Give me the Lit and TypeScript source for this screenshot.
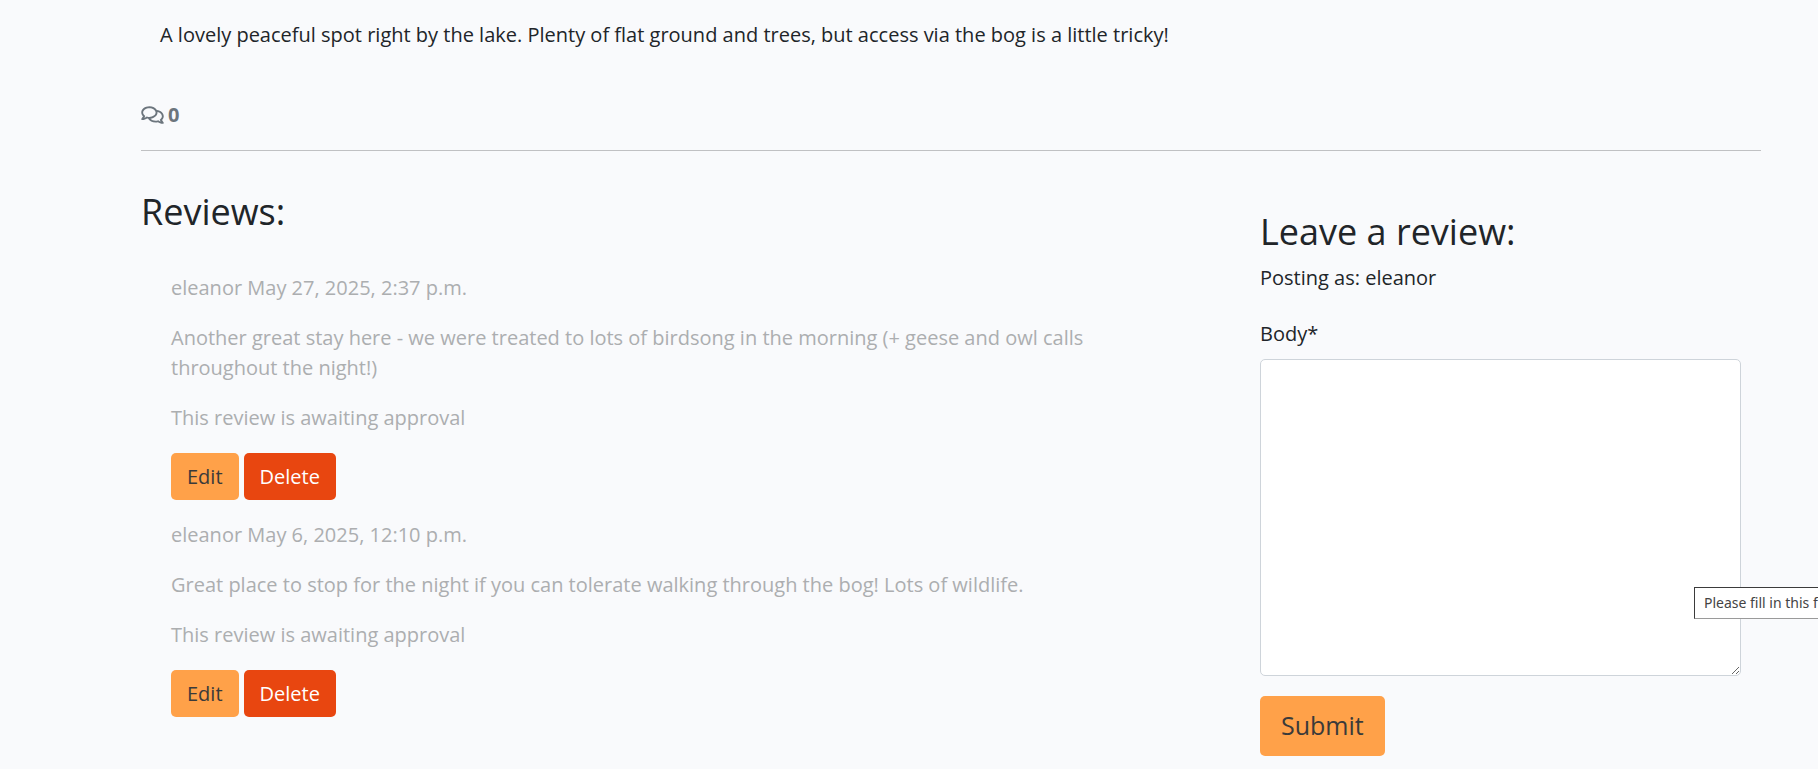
import { LitElement, html, css } from "lit";
import { customElement, property } from "lit/decorators.js";

interface Review {
  author: string;
  date: string;
  body: string;
}

const REVIEWS: Review[] = [
  {
    author: "eleanor",
    date: "May 27, 2025, 2:37 p.m.",
    body: "Another great stay here - we were treated to lots of birdsong in the morning (+ geese and owl calls throughout the night!)",
  },
  {
    author: "eleanor",
    date: "May 6, 2025, 12:10 p.m.",
    body: "Great place to stop for the night if you can tolerate walking through the bog! Lots of wildlife.",
  },
];

const buttonStyles = css`
  .btn {
    border: 0;
    border-radius: 5px;
    padding: 9px 16px 8px;
    font: inherit;
    cursor: pointer;
  }
  .btn-main {
    background: #ffa149;
    color: #3a3a3a;
  }
  .btn-delete {
    background: #e84610;
    color: #ffffff;
    font-weight: 500;
  }
`;

@customElement("review-item")
class ReviewItem extends LitElement {
  @property({ attribute: false }) review!: Review;

  static styles = [
    buttonStyles,
    css`
      :host {
        display: block;
        color: #acaeb0;
      }
      p {
        margin: 0 0 20px;
      }
      .actions {
        display: flex;
        gap: 5px;
      }
    `,
  ];

  render() {
    return html`
      <p>${this.review.author} ${this.review.date}</p>
      <p>${this.review.body}</p>
      <p>This review is awaiting approval</p>
      <div class="actions">
        <button class="btn btn-main" type="button">Edit</button>
        <button class="btn btn-delete" type="button">Delete</button>
      </div>
    `;
  }
}

@customElement("review-form")
class ReviewForm extends LitElement {
  static styles = [
    buttonStyles,
    css`
      :host {
        display: block;
      }
      h3 {
        margin: 0 0 10px;
        font-size: 36px;
        font-weight: 400;
        line-height: 42px;
      }
      p {
        margin: 0 0 26px;
      }
      label {
        display: block;
        margin-bottom: 10px;
      }
      .field {
        position: relative;
        display: grid;
        margin-bottom: 20px;
      }
      textarea {
        box-sizing: border-box;
        width: 100%;
        height: 317px;
        margin: 0;
        padding: 8px 15px;
        border: 1px solid #ced4da;
        border-radius: 5px;
        background: #ffffff;
        color: inherit;
        font: inherit;
        resize: vertical;
      }
      .tooltip {
        position: absolute;
        left: calc(100% - 47px);
        bottom: 57px;
        padding: 5px 9px;
        border: 1px solid #3b3b3b;
        border-bottom-color: #9a9a9a;
        background: #ffffff;
        color: #444444;
        font-family: "Noto Sans", "Open Sans", sans-serif;
        font-size: 14px;
        line-height: 20px;
        white-space: nowrap;
      }
      .btn-large {
        padding: 10px 21px 12px;
        font-size: 25px;
        line-height: 38px;
      }
    `,
  ];

  render() {
    return html`
      <h3>Leave a review:</h3>
      <p>Posting as: eleanor</p>
      <form>
        <label for="body">Body*</label>
        <div class="field">
          <textarea id="body" name="body" required></textarea>
          <div class="tooltip" role="tooltip">Please fill in this field.</div>
        </div>
        <button class="btn btn-main btn-large" type="submit">Submit</button>
      </form>
    `;
  }
}

@customElement("app-root")
class AppRoot extends LitElement {
  static styles = css`
    :host {
      display: block;
      box-sizing: border-box;
      min-height: 100vh;
      padding: 20px 57px 12px 141px;
      overflow-x: clip;
      background: #f9fafc;
      color: #212529;
      font: 400 20px/30px "Open Sans", sans-serif;
    }
    .description {
      margin: 0 19px 50px;
    }
    .count {
      display: flex;
      align-items: center;
      gap: 4px;
      color: #6c757d;
      font-weight: 700;
    }
    .count svg {
      width: 23px;
      height: 20px;
    }
    hr {
      height: 1px;
      margin: 20px 0 40px;
      border: 0;
      background: #c0c1c3;
    }
    .row {
      display: grid;
      grid-template-columns: 2fr 1fr;
      margin: 0 -15px;
    }
    .col {
      padding: 0 15px;
    }
    h3 {
      margin: 0 0 40px;
      font-size: 36px;
      font-weight: 400;
      line-height: 42px;
    }
    .reviews {
      display: grid;
      gap: 20px;
      padding: 0 30px;
    }
    review-form {
      margin: 20px 20px 0 19px;
    }
  `;

  render() {
    return html`
      <p class="description">
        A lovely peaceful spot right by the lake. Plenty of flat ground and trees, but access via
        the bog is a little tricky!
      </p>
      <div class="count">
        <svg viewBox="0 0 576 512" fill="currentColor" aria-hidden="true">
          <path
            d="M532 386.2c27.5-27.1 44-61.1 44-98.2 0-80-76.5-146.1-176.2-157.9C368.3 72.5 294.3 32 208 32 93.1 32 0 103.6 0 192c0 37 16.5 71 44 98.2-15.3 30.7-37.3 54.5-37.7 54.9-6.3 6.7-8.1 16.5-4.4 25 3.6 8.5 12 14 21.2 14 53.5 0 96.7-20.2 125.2-38.8 9.2 2.1 18.7 3.7 28.4 4.9C208.1 407.6 281.8 448 368 448c20.8 0 40.8-2.4 59.8-6.8C456.3 459.7 499.4 480 553 480c9.2 0 17.5-5.5 21.2-14 3.6-8.5 1.9-18.3-4.4-25-.4-.3-22.5-24.1-37.8-54.8zm-392.8-92.3L122.1 305c-14.1 9.1-28.5 16.3-43.1 21.4 2.7-4.7 5.4-9.7 8-14.8l15.5-31.1L77.7 256C64.2 242.6 48 220.7 48 192c0-60.7 73.3-112 160-112s160 51.3 160 112-73.3 112-160 112c-16.5 0-33-1.9-49-5.6l-19.8-4.5zM498.3 352l-24.7 24.4 15.5 31.1c2.6 5.1 5.3 10.1 8 14.8-14.6-5.1-29-12.3-43.1-21.4l-17.1-11.1-19.9 4.6c-16 3.7-32.5 5.6-49 5.6-54 0-102.2-20.1-131.3-49.7C338 339.5 416 272.9 416 192c0-3.4-.4-6.7-.7-10C479.7 196.5 528 238.8 528 288c0 28.7-16.2 50.6-29.7 64z"
          />
        </svg>
        <span>0</span>
      </div>
      <hr />
      <div class="row">
        <section class="col">
          <h3>Reviews:</h3>
          <div class="reviews">
            ${REVIEWS.map((r) => html`<review-item .review=${r}></review-item>`)}
          </div>
        </section>
        <section class="col">
          <review-form></review-form>
        </section>
      </div>
    `;
  }
}
